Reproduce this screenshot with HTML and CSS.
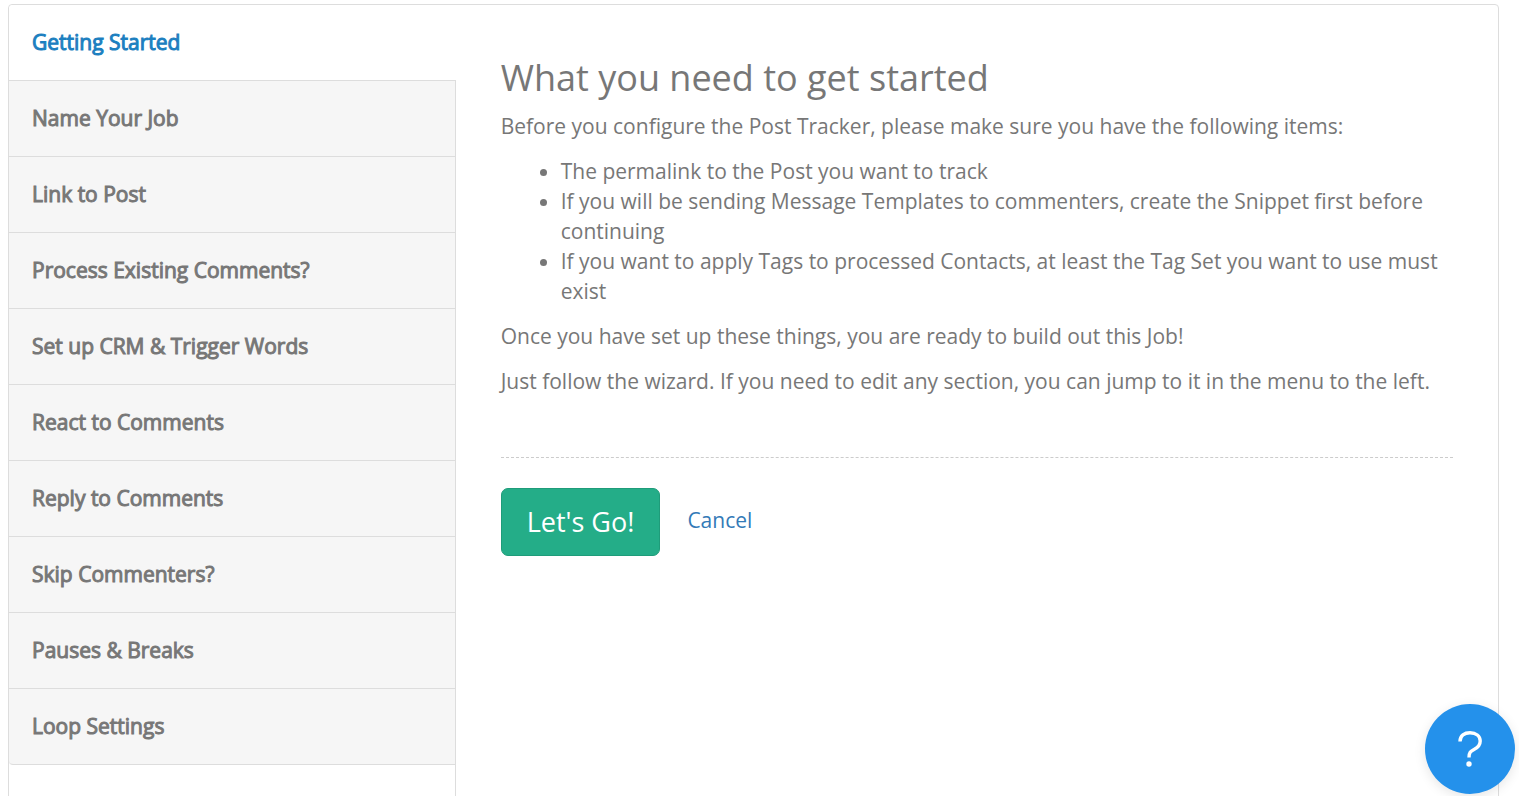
FILE: index.html
```html
<!DOCTYPE html>
<html lang="en">
<head>
  <meta charset="UTF-8">
  <meta name="viewport" content="width=device-width, initial-scale=1">
  <title>Post Tracker</title>
  <link rel="stylesheet" href="styles.css">
</head>
<body>

  <div class="wizard">
    <nav class="wizard-nav">
      <ul class="steps">
        <li><a class="step active" href="#start">Getting Started</a></li>
        <li><a class="step" href="#name">Name Your Job</a></li>
        <li><a class="step" href="#link">Link to Post</a></li>
        <li><a class="step" href="#existing">Process Existing Comments?</a></li>
        <li><a class="step" href="#crm">Set up CRM &amp; Trigger Words</a></li>
        <li><a class="step" href="#react">React to Comments</a></li>
        <li><a class="step" href="#reply">Reply to Comments</a></li>
        <li><a class="step" href="#skip">Skip Commenters?</a></li>
        <li><a class="step" href="#pauses">Pauses &amp; Breaks</a></li>
        <li><a class="step" href="#loop">Loop Settings</a></li>
      </ul>
    </nav>

    <main class="wizard-content" id="start">
      <h2>What you need to get started</h2>
      <p>Before you configure the Post Tracker, please make sure you have the following items:</p>
      <ul class="needs">
        <li>The permalink to the Post you want to track</li>
        <li>If you will be sending Message Templates to commenters, create the Snippet first before continuing</li>
        <li>If you want to apply Tags to processed Contacts, at least the Tag Set you want to use must exist</li>
      </ul>
      <p>Once you have set up these things, you are ready to build out this Job!</p>
      <p>Just follow the wizard. If you need to edit any section, you can jump to it in the menu to the left.</p>

      <div class="actions">
        <button class="btn-go" type="button">Let's Go!</button>
        <a class="cancel" href="#cancel">Cancel</a>
      </div>
    </main>
  </div>

  <button class="help" type="button" aria-label="Help">
    <svg width="30" height="40" viewBox="0 0 30 40" fill="none">
      <path d="M5 12.500C5 6.500 9.500 3.800 15 3.800C21 3.800 25.200 7 25.200 12C25.200 16.500 22.500 18.800 19 20.500C15.500 22.300 14 23.500 14 28.500" stroke="#fff" stroke-width="3.400"/>
      <circle cx="14" cy="35" r="2.700" fill="#fff"/>
    </svg>
  </button>

</body>
</html>
```
FILE: styles.css
```css
* {
  box-sizing: border-box;
}
body {
  margin: 0;
  padding: 4px 20px 0 8px;
  height: 100vh;
  overflow: hidden;
  background-color: #fff;
  color: #777;
  font-family: "Open Sans", Arial, sans-serif;
  font-size: 21px;
  line-height: 30px;
}
a {
  color: #337ab7;
  text-decoration: none;
}

/* Wizard */
.wizard {
  display: flex;
  min-height: 100vh;
  border: 1px solid #ddd;
  border-radius: 4px;
}
.wizard-nav {
  width: 30%;
  border-right: 1px solid #ddd;
}
.steps {
  list-style: none;
  margin: 0;
  padding: 0;
}
.step {
  display: block;
  padding: 22px 23px 23px;
  border-bottom: 1px solid #ddd;
  background-color: #f6f6f6;
  color: #777;
  -webkit-text-stroke: 1px;
}
.step.active {
  background-color: #fff;
  color: #1c7fc0;
  margin-right: -1px;
  border-radius: 4px 0 0 0;
}
.steps li:last-child .step {
  border-bottom-left-radius: 4px;
}
.wizard-content {
  flex: 1;
  padding: 53px 45px 45px;
}
h2 {
  margin: 0 0 13px;
  font-size: 36px;
  font-weight: 400;
  line-height: 40px;
}
p {
  margin: 0 0 15px;
}
.needs {
  margin: 0 0 15px;
  padding-left: 60px;
}

/* Buttons */
.actions {
  display: flex;
  align-items: flex-start;
  gap: 27px;
  margin-top: 61px;
  padding-top: 30px;
  border-top: 1px dashed #ccc;
}
.btn-go {
  padding: 15px 25px;
  border: 1px solid #1f9c7a;
  border-radius: 7px;
  background-color: #24ad88;
  color: #fff;
  font-family: inherit;
  font-size: 27px;
  line-height: 36px;
  cursor: pointer;
}
.cancel {
  margin-top: 17px;
}

/* Floating help */
.help {
  position: fixed;
  right: 4px;
  bottom: 2px;
  display: flex;
  align-items: center;
  justify-content: center;
  width: 90px;
  height: 90px;
  padding: 0;
  border: none;
  border-radius: 50%;
  background-color: #2491eb;
  box-shadow: 0 3px 12px rgba(0, 0, 0, 0.1);
  cursor: pointer;
}
```
